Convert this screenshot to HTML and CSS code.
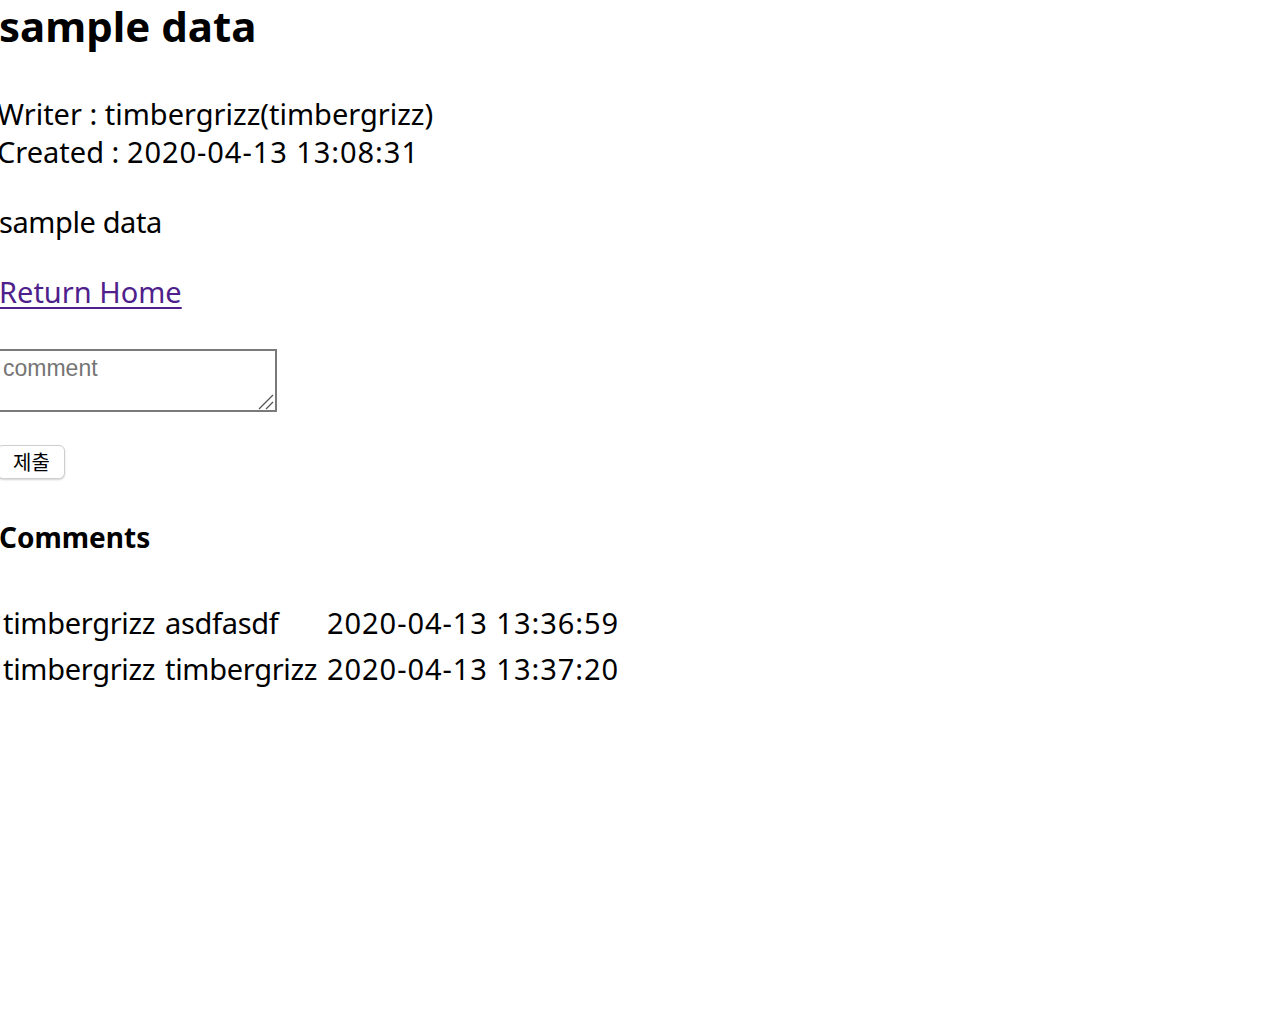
FILE: index.html
```html
<!DOCTYPE html>
<html lang="ko">
<head>
<meta charset="utf-8">
<title>sample data</title>
<link rel="stylesheet" href="styles.css">
</head>
<body>
<div class="page">
  <h1 class="title">sample data</h1>
  <div class="meta">
    <div>Writer : timbergrizz(timbergrizz)</div>
    <div>Created : <span class="date">2020-04-13 13:08:31</span></div>
  </div>
  <p class="content">sample data</p>
  <div class="home-row"><a class="home" href="#">Return Home</a></div>
  <form class="comment-form">
    <div class="input-wrap">
      <textarea class="comment-input" placeholder="comment"></textarea>
      <svg class="grip" width="16" height="16" viewBox="0 0 16 16" aria-hidden="true">
        <line x1="1" y1="15" x2="15" y2="1" stroke="#555" stroke-width="1.3"/>
        <line x1="8" y1="15" x2="15" y2="8" stroke="#555" stroke-width="1.3"/>
      </svg>
    </div>
    <button type="button" class="submit">제출</button>
  </form>
  <h3 class="comments-title">Comments</h3>
  <table class="comments">
    <tr><td class="c-name">timbergrizz</td><td class="c-text">asdfasdf</td><td class="date">2020-04-13 13:36:59</td></tr>
    <tr><td class="c-name">timbergrizz</td><td class="c-text">timbergrizz</td><td class="date">2020-04-13 13:37:20</td></tr>
  </table>
</div>
</body>
</html>
```

FILE: styles.css
```css
html, body {
  margin: 0;
  padding: 0;
  background: #fff;
}
body {
  font-family: "Noto Sans", "Noto Sans CJK KR", sans-serif;
  color: #000;
  font-size: 29px;
  overflow: hidden;
}
.page {
  margin-left: -3px;
}
.title {
  font-size: 42px;
  font-weight: 700;
  margin: 0 0 0 2px;
  line-height: 52px;
}
.meta {
  margin-top: 43px;
  line-height: 38px;
}
.date {
  letter-spacing: 0.95px;
}
.content {
  margin: 32px 0 0 2px;
  line-height: 38px;
  letter-spacing: -0.4px;
}
.home-row {
  margin: 32px 0 0 2px;
  line-height: 38px;
}
.home {
  color: #4f1f8c;
  text-decoration: underline;
  text-decoration-thickness: 2px;
  text-underline-offset: 4px;
}
.comment-form {
  display: flex;
  flex-direction: column;
  align-items: flex-start;
  margin-top: 38px;
}
.input-wrap {
  position: relative;
  display: flex;
}
.comment-input {
  box-sizing: border-box;
  width: 280px;
  height: 63px;
  margin: 0;
  border: 2px solid #7a7a7a;
  padding: 4px 4px;
  font-family: "Liberation Sans", Arial, sans-serif;
  font-size: 23px;
  line-height: 26px;
  resize: none;
  background: #fff;
}
.comment-input::placeholder {
  color: #757575;
}
.grip {
  position: absolute;
  right: 3px;
  bottom: 2px;
  pointer-events: none;
}
.submit {
  box-sizing: border-box;
  margin-top: 33px;
  height: 34px;
  width: 68px;
  padding: 0 0 0 1px;
  background: #fff;
  border: 1px solid #cfcfcf;
  border-radius: 6px;
  box-shadow: 0 1px 2px rgba(0,0,0,0.18);
  font-family: "Noto Sans CJK KR", sans-serif;
  font-size: 20px;
  line-height: 30px;
  color: #000;
}
.comments-title {
  font-size: 28px;
  font-weight: 700;
  margin: 39px 0 0 2px;
  line-height: 38px;
}
.comments {
  margin-top: 40px;
  border-spacing: 4px 8px;
  font-size: 29px;
}
.comments td {
  padding: 0 2px;
  line-height: 38px;
  white-space: nowrap;
}
.comments .c-name,
.comments .c-text {
  width: 154px;
  letter-spacing: -0.3px;
}
```
